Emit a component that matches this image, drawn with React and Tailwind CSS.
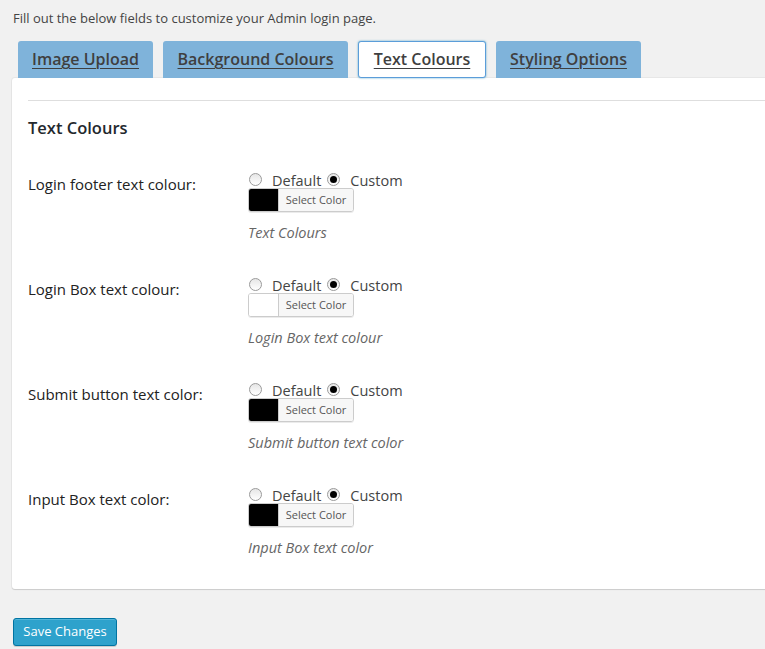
const font = { fontFamily: '"Open Sans", "Liberation Sans", sans-serif' };

const tabs = [
  { label: "Image Upload", w: "w-[135px]" },
  { label: "Background Colours", w: "w-[185px]" },
  { label: "Text Colours", w: "w-[128px]", active: true },
  { label: "Styling Options", w: "w-[145px]" },
];

const rows = [
  { label: "Login footer text colour:", swatch: "bg-black", desc: "Text Colours" },
  { label: "Login Box text colour:", swatch: "bg-white", desc: "Login Box text colour" },
  { label: "Submit button text color:", swatch: "bg-black", desc: "Submit button text color" },
  { label: "Input Box text color:", swatch: "bg-black", desc: "Input Box text color" },
];

const Radio = ({ checked }) => (
  <span className="inline-flex w-[13px] h-[13px] rounded-full border border-[#9a9a9a] bg-gradient-to-b from-[#e6e6e6] to-white items-center justify-center shrink-0 -mt-[3px]">
    {checked && <span className="w-[7px] h-[7px] rounded-full bg-black"></span>}
  </span>
);

const App = () => {
  return (
    <div className="min-h-[649px] bg-[#f1f1f1] overflow-hidden text-[#444]" style={font}>
      <p className="pl-[13px] pt-[8px] text-[13px] leading-[20px]">
        Fill out the below fields to customize your Admin login page.
      </p>

      {/* Tabs */}
      <div className="flex gap-[10px] pl-[18px] mt-[13px] h-[37px]">
        {tabs.map((t) => (
          <div
            key={t.label}
            className={`${t.w} h-[37px] rounded-t-[3px] flex justify-center items-center pb-[1px] text-[16px] font-semibold underline underline-offset-[3px] decoration-1 text-[#3f3f3f] ${
              t.active ? "bg-white border border-[#5b9dd9] rounded-[3px] shadow-[0_0_2px_rgba(30,140,190,0.8)] h-[36px]" : "bg-[#7fb3da]"
            }`}
          >
            {t.label}
          </div>
        ))}
      </div>

      {/* Panel */}
      <div className="ml-[12px] w-[780px] bg-white rounded-[3px] shadow-[0_1px_1px_rgba(0,0,0,0.12),0_0_0_1px_rgba(0,0,0,0.04)] pl-[16px] pt-[22px] pb-[31px]">
        <div className="h-px bg-[#dedede]"></div>
        <h3 className="mt-[17px] text-[16.5px] leading-[20px] font-semibold text-[#23282d]">Text Colours</h3>
        <div className="mt-[33px] flex flex-col gap-[33px]">
          {rows.map((r) => (
            <div key={r.label} className="flex">
              <div className="w-[220px] pt-[3px] text-[15px] leading-[20px] text-[#222]">{r.label}</div>
              <div className="flex flex-col">
                <div className="flex items-center mt-[4px] h-[12px] text-[14.5px] text-[#444]">
                  <span className="ml-[1px] flex"><Radio /></span>
                  <span className="ml-[10px]">Default</span>
                  <span className="ml-[6px] flex"><Radio checked /></span>
                  <span className="ml-[10px]">Custom</span>
                </div>
                <div className="mt-[1px] flex w-[106px] h-[24px] rounded-[3px] border border-[#ccc] overflow-hidden shadow-[0_1px_0_rgba(0,0,0,0.08)]">
                  <div className={`w-[30px] ${r.swatch} border-r border-[#ccc]`}></div>
                  <div className="flex-1 bg-[#f7f7f7] flex items-center justify-center text-[11px] text-[#555]">Select Color</div>
                </div>
                <div className="mt-[11px] text-[14.5px] leading-[20px] italic text-[#666]">{r.desc}</div>
              </div>
            </div>
          ))}
        </div>
      </div>

      <button className="ml-[13px] mt-[29px] w-[104px] h-[28px] rounded-[3px] bg-[#2ea2cc] border border-[#0074a2] text-white text-[13px] shadow-[inset_0_1px_0_rgba(120,200,230,0.5),0_1px_0_rgba(0,0,0,0.15)]">
        Save Changes
      </button>
    </div>
  );
};

export default App;
